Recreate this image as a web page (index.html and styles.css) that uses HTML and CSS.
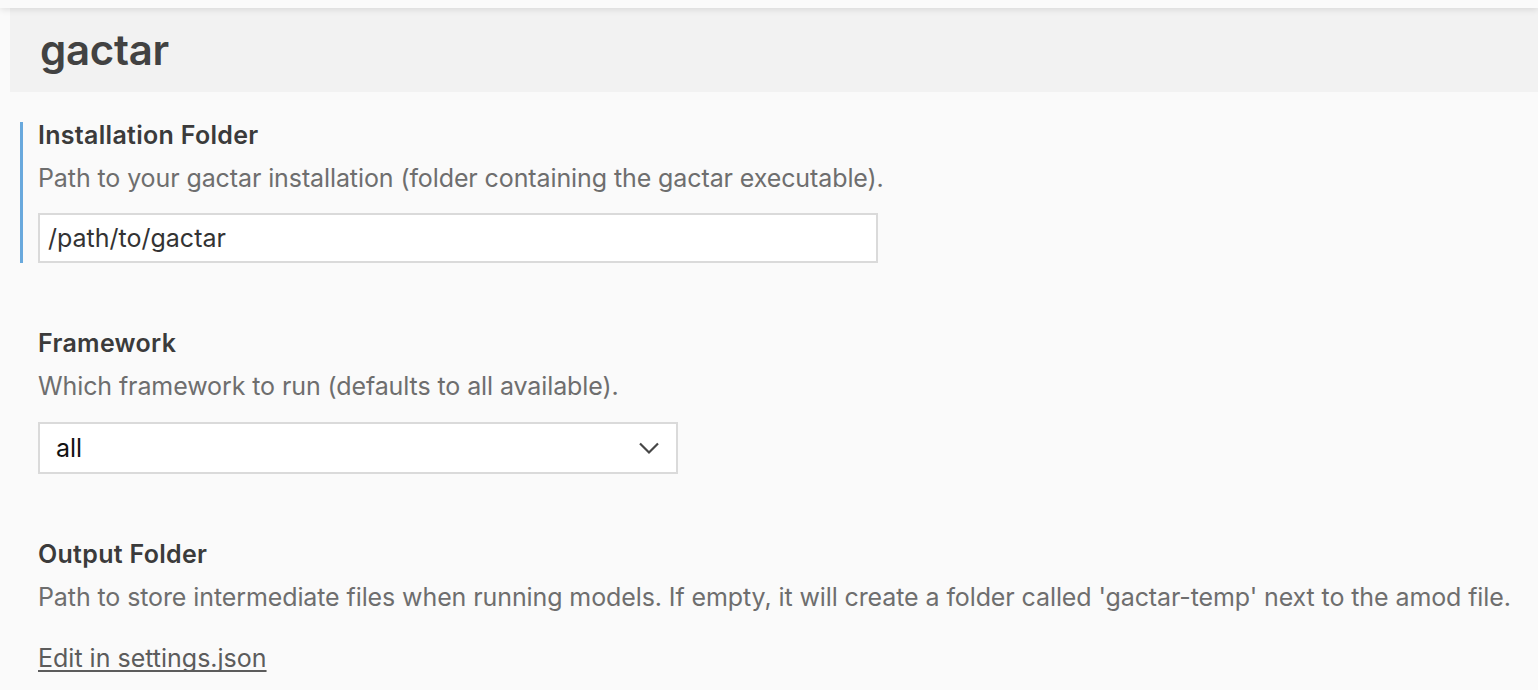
FILE: index.html
```html
<!DOCTYPE html>
<html lang="en">
<head>
<meta charset="utf-8">
<title>gactar settings</title>
<link rel="stylesheet" href="styles.css">
</head>
<body>
<div class="topbar"></div>
<div class="page">
  <header class="header">
    <h1 class="title">gactar</h1>
  </header>
  <div class="settings">
    <section class="setting focused">
      <div class="label">Installation Folder</div>
      <div class="desc">Path to your gactar installation (folder containing the gactar executable).</div>
      <div class="input">/path/to/gactar</div>
    </section>
    <section class="setting">
      <div class="label">Framework</div>
      <div class="desc">Which framework to run (defaults to all available).</div>
      <div class="select">
        <span class="select-value">all</span>
        <svg class="chevron" width="22" height="13" viewBox="0 0 22 13" aria-hidden="true"><path d="M2 1.5 L11 10.5 L20 1.5" fill="none" stroke="#474747" stroke-width="2.2"/></svg>
      </div>
    </section>
    <section class="setting">
      <div class="label">Output Folder</div>
      <div class="desc">Path to store intermediate files when running models. If empty, it will create a folder called 'gactar-temp' next to the amod file.</div>
      <div class="link-row"><a class="edit-link" href="#">Edit in settings.json</a></div>
    </section>
  </div>
</div>
</body>
</html>
```

FILE: styles.css
```css
html, body {
  margin: 0;
  padding: 0;
  background: #fafafa;
  font-family: Inter, "Noto Sans", sans-serif;
  overflow: hidden;
}
.topbar {
  height: 8px;
  background: #fafafa;
  box-shadow: 0 2px 6px rgba(0,0,0,0.10);
  position: relative;
  z-index: 1;
}
.page {
  padding-left: 10px;
}
.header {
  background: #f2f2f2;
  height: 84px;
  display: flex;
  align-items: center;
  padding-left: 30px;
}
.title {
  margin: 0;
  font-size: 42px;
  font-weight: 600;
  color: #424242;
  letter-spacing: -0.3px;
  line-height: 50px;
}
.settings {
  display: flex;
  flex-direction: column;
  gap: 67px;
  padding-top: 30px;
}
.setting {
  border-left: 3px solid transparent;
  margin-left: 10px;
  padding-left: 15px;
  display: flex;
  flex-direction: column;
  align-items: flex-start;
}
.setting.focused {
  border-left-color: #69a9dd;
}
.label {
  font-size: 25px;
  font-weight: 600;
  color: #3b3b3b;
  line-height: 26px;
  letter-spacing: 0.3px;
}
.desc {
  font-size: 25px;
  color: #6e6e6e;
  line-height: 26px;
  margin-top: 17px;
  letter-spacing: -0.1px;
}
.input {
  margin-top: 22px;
  width: 840px;
  height: 50px;
  box-sizing: border-box;
  border: 2px solid #dadada;
  background: #fff;
  display: flex;
  align-items: center;
  padding-left: 8px;
  font-size: 25px;
  color: #333;
}
.select {
  margin-top: 23px;
  box-sizing: border-box;
  width: 640px;
  height: 52px;
  border: 2px solid #dadada;
  background: #fff;
  display: flex;
  align-items: center;
  justify-content: space-between;
  padding: 0 16px 0 16px;
  font-size: 25px;
  color: #111;
}
.chevron { display: block; }
.link-row {
  margin-top: 35px;
  line-height: 26px;
}
.edit-link {
  font-size: 25px;
  color: #5c5c5c;
  text-decoration-line: underline;
  text-decoration-color: #5c5c5c;
  text-decoration-thickness: 2px;
  text-underline-offset: 3px;
  text-decoration-skip-ink: none;
}
```
